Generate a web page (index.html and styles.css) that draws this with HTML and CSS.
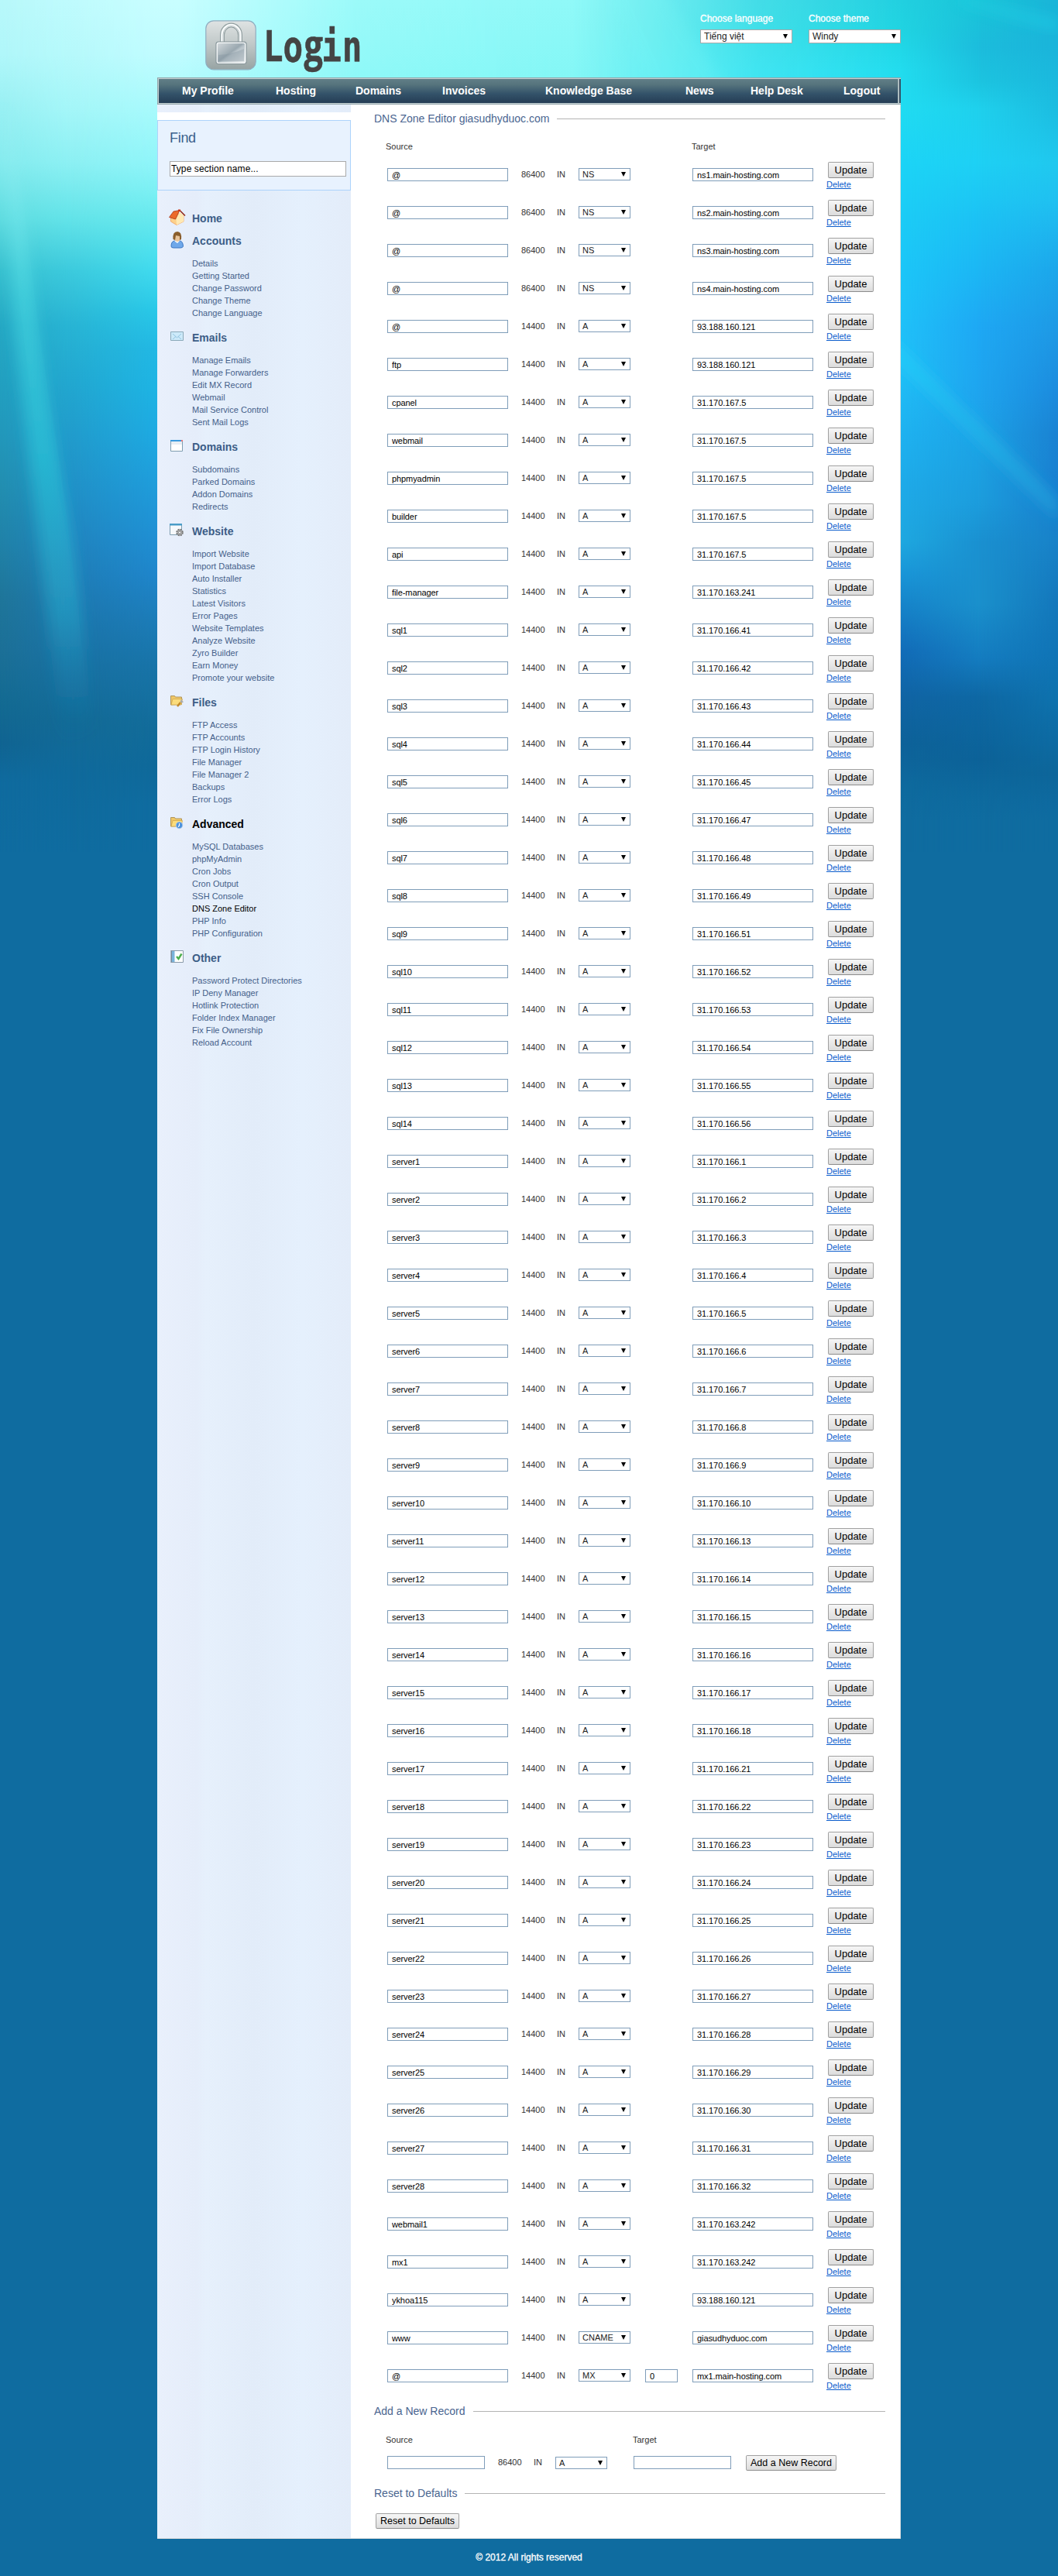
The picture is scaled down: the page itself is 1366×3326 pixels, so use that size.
FILE: index.html
```html
<!DOCTYPE html>
<html lang="en">
<head>
<meta charset="utf-8">
<title>DNS Zone Editor</title>
<link rel="stylesheet" href="styles.css">
</head>
<body>
<div class="sky" aria-hidden="true">
  <div class="tone tone-1"></div>
  <div class="tone tone-2"></div>
  <div class="tone tone-3"></div>
  <div class="tone tone-4"></div>
  <div class="tone tone-5"></div>
  <div class="tone tone-6"></div>
  <div class="tone tone-7"></div>
  <svg class="beams" viewBox="0 0 1366 1100" width="1366" height="1100">
    <defs>
      <linearGradient id="beam" x1="0" y1="0" x2="0" y2="1"><stop offset="0" stop-color="#a8f4f6" stop-opacity=".4"/><stop offset=".3" stop-color="#4cdce4" stop-opacity=".5"/><stop offset=".55" stop-color="#2cccdc" stop-opacity=".55"/><stop offset=".8" stop-color="#2ab4d0" stop-opacity=".4"/><stop offset="1" stop-color="#1a78a8" stop-opacity="0"/></linearGradient>
      <linearGradient id="ray" x1="0" y1="0" x2="1" y2="0"><stop offset="0" stop-color="#24d2fa" stop-opacity=".7"/><stop offset="1" stop-color="#22a4dc" stop-opacity=".6"/></linearGradient>
      <filter id="soft" x="-50%" y="-10%" width="200%" height="120%"><feGaussianBlur stdDeviation="8"/></filter>
    </defs>
    <path d="M2 140Q28 240 44 380T84 640T118 940L80 960Q48 700 18 420Z" fill="url(#beam)" filter="url(#soft)"/>
    <path d="M9 140Q24 200 36 310T66 530T102 800T120 950L88 920Q56 640 24 380Z" fill="url(#beam)" opacity=".15"/>
    <path d="M1150 435L1366 645V672L1150 460Z" fill="url(#ray)" filter="url(#soft)"/>
    <path d="M850-20L1000 200L880 200L780-20Z" fill="#7ef8f6" opacity=".18" filter="url(#soft)"/>
    <path d="M1240-4L1366 26V40L1240 4Z" fill="#24d4e8" opacity=".5" filter="url(#soft)"/>
  </svg>
</div>

<div class="page">
  <header class="header">
    <svg class="logo" width="210" height="74" viewBox="0 0 210 74" role="img" aria-label="Login">
      <defs>
        <linearGradient id="tile" x1="0" y1="0" x2="0" y2="1"><stop offset="0" stop-color="#dfe3e3"/><stop offset=".5" stop-color="#bfc7c7"/><stop offset="1" stop-color="#97a3a3"/></linearGradient>
        <linearGradient id="steel" x1="0" y1="0" x2="1" y2="1"><stop offset="0" stop-color="#d9dee0"/><stop offset=".48" stop-color="#9aa8b0"/><stop offset=".55" stop-color="#b9c4ca"/><stop offset="1" stop-color="#eef1f2"/></linearGradient>
      </defs>
      <rect x=".8" y=".8" width="64.4" height="63" rx="10" fill="url(#tile)" stroke="#8fadc0" stroke-width="1.2"/>
      <path d="M22 30V19a11.500 12.500 0 0 1 23 0V30" fill="none" stroke="#8f9c9e" stroke-width="6"/>
      <path d="M22 30V19a11.500 12.500 0 0 1 23 0V30" fill="none" stroke="#f7fafa" stroke-width="3.600"/>
      <path d="M23 30V19a10.500 11.500 0 0 1 21 0V30" fill="none" stroke="#b9c2c4" stroke-width="1"/>
      <rect x="14" y="28" width="39" height="28.500" rx="3" fill="url(#steel)" stroke="#87959a" stroke-width="1.200"/>
      <rect x="15.300" y="29.300" width="36.400" height="26" rx="2" fill="none" stroke="#f5f8f8" stroke-width="1.300"/>
      <path d="M17 45Q35 44 50 37V53H17Z" fill="#7e909b" opacity=".35"/>
      <g class="logo-text" transform="translate(75 53) scale(.76 1)"><text>Lo<tspan class="logo-g" x="69">g</tspan><tspan x="99">i</tspan><tspan x="134">n</tspan></text></g>
    </svg>
    <form class="prefs">
      <label class="pref">Choose language
        <span class="select pref-select"><select><option>Tiếng việt</option></select></span>
      </label>
      <label class="pref">Choose theme
        <span class="select pref-select"><select><option>Windy</option></select></span>
      </label>
    </form>
  </header>

  <nav class="nav">
    <a>My Profile</a><a>Hosting</a><a>Domains</a><a>Invoices</a><a>Knowledge Base</a><a>News</a><a>Help Desk</a><a>Logout</a>
  </nav>

  <div class="columns">
    <aside class="sidebar">
      <div class="find">
        <h2>Find</h2>
        <input type="text" value="Type section name...">
      </div>
      <section class="group group-home">
        <h3><svg viewBox="0 0 22 22"><path d="M2.500 10L9 5L19 8V16L10 20.500L2.500 16Z" fill="#fdd08a" stroke="#f0a060" stroke-width=".8"/><path d="M9.500 13L14 4L19 8V16L10 20.500Z" fill="#ffe9b4"/><path d="M.5 10.500L6 3L14 1.500L8.500 13Z" fill="#ec6a2a" stroke="#a83414" stroke-width=".8"/><path d="M14 1.500L21 8.500" fill="none" stroke="#8e2414" stroke-width="1.500"/><path d="M12 .5h3v2.500h-3z" fill="#c83418"/></svg>Home</h3>
      </section>
      <section class="group">
        <h3><svg viewBox="0 0 22 22"><path d="M3 19Q3 12 8 12H14Q18 12 18.500 19Q18 21 15 21H6Q3 21 3 19Z" fill="#6fa8ea" stroke="#3d78c4"/><path d="M7 12L11 15L14 12Z" fill="#fff"/><ellipse cx="11" cy="8" rx="4" ry="5" fill="#e8c49a"/><path d="M5.500 10Q4.500 0 11 0Q17 0 16 10L14 11V6L9 5L8 11Z" fill="#8a5e2c"/></svg>Accounts</h3>
        <ul><li>Details</li><li>Getting Started</li><li>Change Password</li><li>Change Theme</li><li>Change Language</li></ul>
      </section>
      <section class="group">
        <h3><svg viewBox="0 0 22 22"><path d="M2.500 4.500h16v11h-16z" fill="#cdeafa" stroke="#8aa8b8"/><path d="M5 7L10.500 12L16 7M5 14L9 10.500M16 14L12 10.500" fill="none" stroke="#8cc0dc" stroke-width=".9"/></svg>Emails</h3>
        <ul><li>Manage Emails</li><li>Manage Forwarders</li><li>Edit MX Record</li><li>Webmail</li><li>Mail Service Control</li><li>Sent Mail Logs</li></ul>
      </section>
      <section class="group">
        <h3><svg viewBox="0 0 22 22"><path d="M2.500 3.500h15v14h-15z" fill="#fff" stroke="#7f9db0"/><path d="M3 5h14v4H3z" fill="#e8eef4"/><path d="M2 3h14v2H2z" fill="#3a9ade"/><path d="M16 3h2v2h-2z" fill="#f07878"/></svg>Domains</h3>
        <ul><li>Subdomains</li><li>Parked Domains</li><li>Addon Domains</li><li>Redirects</li></ul>
      </section>
      <section class="group">
        <h3><svg viewBox="0 0 22 22"><path d="M1.500 2.500h15v14h-15z" fill="#f6f9fc" stroke="#7f9db0"/><path d="M1 2h16v2.500H1z" fill="#4a9cc8"/><circle cx="14" cy="13.500" r="3.800" fill="#b8b8b8" stroke="#777" stroke-width="2" stroke-dasharray="2 1"/><circle cx="14" cy="13.500" r="1.500" fill="#fff" stroke="#666" stroke-width=".7"/></svg>Website</h3>
        <ul><li>Import Website</li><li>Import Database</li><li>Auto Installer</li><li>Statistics</li><li>Latest Visitors</li><li>Error Pages</li><li>Website Templates</li><li>Analyze Website</li><li>Zyro Builder</li><li>Earn Money</li><li>Promote your website</li></ul>
      </section>
      <section class="group">
        <h3><svg viewBox="0 0 22 22"><path d="M2.500 15V3.500h5l1 1.500h8v9.500z" fill="#f0c868" stroke="#b09458"/><path d="M3 15L5 7.500H17.500L16 15Z" fill="#fbdc7c" stroke="#d0a850" stroke-width=".8"/><path d="M11 17L15 12" stroke="#c48a28" stroke-width="2.500"/><path d="M15 12Q14 9 17 8V10L19 11Q18 13 15 12Z" fill="#aaa"/></svg>Files</h3>
        <ul><li>FTP Access</li><li>FTP Accounts</li><li>FTP Login History</li><li>File Manager</li><li>File Manager 2</li><li>Backups</li><li>Error Logs</li></ul>
      </section>
      <section class="group current">
        <h3><svg viewBox="0 0 22 22"><path d="M2.500 15V3.500h5l1 1.500h8v9.500z" fill="#f0c868" stroke="#b09458"/><path d="M3 15L5 7.500H17.500L16 15Z" fill="#fbdc7c" stroke="#d0a850" stroke-width=".8"/><circle cx="13.500" cy="13.500" r="4.200" fill="#4a90dc" stroke="#a8c8ea"/><path d="M13.500 11V14L12 15.500" fill="none" stroke="#fff" stroke-width="1.200"/></svg>Advanced</h3>
        <ul><li>MySQL Databases</li><li>phpMyAdmin</li><li>Cron Jobs</li><li>Cron Output</li><li>SSH Console</li><li class="current">DNS Zone Editor</li><li>PHP Info</li><li>PHP Configuration</li></ul>
      </section>
      <section class="group">
        <h3><svg viewBox="0 0 22 22"><path d="M3.500 2.500h15v15h-15z" fill="#fff" stroke="#8a9aa8"/><path d="M4 3h3.500v14H4z" fill="#7ab4dc"/><path d="M3 2.500V18" stroke="#66788a" stroke-width="2" stroke-dasharray="1 1"/><path d="M10 10L12.500 13L16.500 6.500" fill="none" stroke="#4cae4c" stroke-width="2.400"/></svg>Other</h3>
        <ul><li>Password Protect Directories</li><li>IP Deny Manager</li><li>Hotlink Protection</li><li>Folder Index Manager</li><li>Fix File Ownership</li><li>Reload Account</li></ul>
      </section>
    </aside>

    <main class="main">
      <h2 class="title">DNS Zone Editor giasudhyduoc.com</h2>
      <div class="record labels"><span class="source">Source</span><span class="target">Target</span></div>
      <div id="records" class="records"></div>

      <h2 class="title">Add a New Record</h2>
      <div class="new-record labels"><span class="source">Source</span><span class="target">Target</span></div>
      <div class="new-record fields">
        <input class="field" type="text">
        <span class="text">86400</span>
        <span class="text">IN</span>
        <span class="select type"><select><option>A</option></select></span>
        <input class="field" type="text">
        <button class="button add" type="button">Add a New Record</button>
      </div>

      <h2 class="title">Reset to Defaults</h2>
      <button class="button reset" type="button">Reset to Defaults</button>
    </main>
  </div>
  <footer class="footer">© 2012 All rights reserved</footer>
</div>
<script src="records.js"></script>
</body>
</html>
```

FILE: records.js
```js
// [source, ttl, type, target, priority]
const records = [];
for (let i = 1; i <= 4; i++) records.push(['@', 86400, 'NS', `ns${i}.main-hosting.com`]);
records.push(
  ['@', 14400, 'A', '93.188.160.121'],
  ['ftp', 14400, 'A', '93.188.160.121']
);
for (const name of ['cpanel', 'webmail', 'phpmyadmin', 'builder', 'api']) {
  records.push([name, 14400, 'A', '31.170.167.5']);
}
records.push(['file-manager', 14400, 'A', '31.170.163.241']);
[41, 42, 43, 44, 45, 47, 48, 49, 51, 52, 53, 54, 55, 56].forEach((host, i) => {
  records.push([`sql${i + 1}`, 14400, 'A', `31.170.166.${host}`]);
});
[1, 2, 3, 4, 5, 6, 7, 8, 9, 10, 13, 14, 15, 16, 17, 18, 21, 22, 23, 24, 25, 26, 27, 28, 29, 30, 31, 32].forEach((host, i) => {
  records.push([`server${i + 1}`, 14400, 'A', `31.170.166.${host}`]);
});
records.push(
  ['webmail1', 14400, 'A', '31.170.163.242'],
  ['mx1', 14400, 'A', '31.170.163.242'],
  ['ykhoa115', 14400, 'A', '93.188.160.121'],
  ['www', 14400, 'CNAME', 'giasudhyduoc.com'],
  ['@', 14400, 'MX', 'mx1.main-hosting.com', 0]
);

document.getElementById('records').innerHTML = records.map(([source, ttl, type, target, priority]) => `
  <div class="record">
    <input class="field" type="text" value="${source}">
    <span class="text">${ttl}</span>
    <span class="text">IN</span>
    <span class="select type"><select><option>${type}</option></select></span>
    <span>${priority === undefined ? '' : `<input class="field priority" type="text" value="${priority}">`}</span>
    <input class="field" type="text" value="${target}">
    <span class="actions"><button class="button" type="button">Update</button><a class="delete" href="#">Delete</a></span>
  </div>`).join('');
```

FILE: styles.css
```css
* { box-sizing: border-box; }
body {
  margin: 0;
  min-height: 3326px;
  position: relative;
  background: #0f6ca0;
  font: 11px/16px "Liberation Sans", Arial, sans-serif;
  color: #333;
}
h2, h3, ul { margin: 0; padding: 0; font-weight: normal; }
ul { list-style: none; }
input, select, button { font-family: inherit; margin: 0; }

/* Backdrop: vertical tones cross-faded from left to right */
.sky { position: absolute; left: 0; top: 0; width: 1366px; height: 1100px; overflow: hidden; }
.tone, .beams { position: absolute; left: 0; top: 0; width: 1366px; height: 1100px; }
.tone-1 { background: linear-gradient(#b8f8fa 0, #b0f7fa 70px, #98f0f3 140px, #84ebee 210px, #60dce0 280px, #38c0cf 350px, #25a8c4 420px, #22a0c0 490px, #2298bb 560px, #228eb0 630px, #2082a8 700px, #1f769a 770px, #1c7097 840px, #136a92 910px, #106492 960px, #0f6b9f 1010px, #0f6ca0 1100px); }
.tone-2 {
  background: linear-gradient(#bffbfd 0, #b6f9fb 70px, #a4f6f8 140px, #8cf0f3 210px, #64e4e9 280px, #3ccadd 350px, #28b4d4 420px, #22a8d0 490px, #219ccc 560px, #208fc6 640px, #2084be 700px, #1d78b0 780px, #1870a2 860px, #136a96 930px, #0f6a9c 1000px, #0f6ca0 1100px);
  mask-image: linear-gradient(90deg, transparent 0, #000 90px);
}
.tone-3 {
  background: linear-gradient(#c8feff 0, #c0fcff 70px, #a8fafc 140px, #8ff5f9 210px, #7cf0f4 245px, #68e9ee 280px, #50e2ee 320px, #40daee 350px, #29c8e8 400px, #22b8e4 450px, #1eb4e4 500px, #1eaae2 560px, #1f9edc 620px, #1f90d4 690px, #1f86cc 740px, #1c7cb8 800px, #1874a8 860px, #126c9a 940px, #0f699a 990px, #0f6ca0 1040px);
  mask-image: linear-gradient(90deg, transparent 90px, #000 204px);
}
.tone-4 {
  background: linear-gradient(#90f9f8 0, #84f7f6 100px);
  mask-image: linear-gradient(90deg, transparent 230px, rgba(0,0,0,.8) 460px, #000 720px);
}
.tone-5 {
  background: linear-gradient(#22d0e0 0, #20d4e2 40px, #22dcee 90px, #20dcf2 140px, #1cd4f6 210px, #1cccf6 280px, #1cc6f8 350px, #20c0f8 440px, #20bef6 490px, #1eb2f0 560px, #1eaae8 630px, #1ea8e0 700px, #1a96d8 740px, #1684ca 780px, #126cb8 840px, #1064a4 900px, #0d6299 960px, #0e6a9e 1020px, #0f6ca0 1060px);
  mask-image: linear-gradient(90deg, transparent 740px, rgba(0,0,0,.7) 980px, #000 1163px);
}
.tone-6 {
  background: linear-gradient(#1ac4d8 0, #1cbcdc 60px, #1cc4e0 105px, #1fd0ec 140px, #1ed0f4 210px, #1cc2f4 280px, #1cb6f4 350px, #1ea8f4 420px, #1ea4ee 510px, #1ca2e4 580px, #1c9cdc 650px, #1a90d0 700px, #1a90cc 780px, #147cc0 850px, #0e68a4 900px, #0c6298 980px, #0e6a9e 1030px, #0f6ca0 1060px);
  mask-image: linear-gradient(90deg, transparent 1163px, #000 1265px);
}
.tone-7 {
  background: linear-gradient(#1ab4d8 0, #1ab4da 60px, #1cbce0 140px, #20c8ee 210px, #20c0f0 260px, #1eb4ee 300px, #1ca6ea 350px, #1e98e4 430px, #1c8cde 500px, #1a82d2 560px, #1880d0 640px, #1882c8 700px, #1478bc 770px, #1074b6 840px, #0e72ae 900px, #0d6ca4 950px, #0d669a 1000px, #0e6aa0 1040px, #0f6ca0 1060px);
  mask-image: linear-gradient(90deg, transparent 1265px, #000 1366px);
}

.page { position: relative; width: 960px; margin: 0 auto; }

.header { height: 100px; display: flex; justify-content: space-between; padding: 26px 0 0 62px; }
.logo { display: block; overflow: visible; }
.logo-text { font: bold 56px "DejaVu Sans Mono", monospace; fill: #444; stroke: #444; stroke-width: .6px; }
.logo-g { font: bold 57px "Open Sans", sans-serif; }
.prefs { display: flex; gap: 21px; margin-top: -10px; }
.pref { width: 119px; display: flex; flex-direction: column; gap: 6px; color: #fff; font-size: 12px; line-height: 16px; -webkit-text-stroke: .3px #fff; }

.select { display: block; position: relative; }
.select select {
  display: block; width: 100%; height: 100%; padding: 0 0 0 4px;
  appearance: none; border: 1px solid #7f9db9; border-radius: 0;
  background: #fff; color: #222; font-size: 11px;
}
.select::after { content: ""; position: absolute; right: 6px; top: 5px; border: 3px solid transparent; border-top: 6px solid #000; border-bottom: 0; }
.pref-select { height: 18px; -webkit-text-stroke: 0; }
.pref-select select { border-color: #a9a9a9; font-size: 12px; }
.pref-select::after { top: 6px; }

.nav {
  height: 35px; display: grid; grid-template-columns: 121px 103px 112px 133px 181px 84px 120px auto;
  padding-left: 31px; border: 1px solid #93a5aa; border-right: 0;
  background: linear-gradient(#627f88, #56747d 25%, #34536a 60%, #233b53);
  box-shadow: inset 1px 1px #c4d2d4, inset 0 -1px #c4d2d4, inset -2px 0 #344d60, inset -3px 0 #c4d2d4, inset -4px 0 #93a5aa;
  font-weight: bold; font-size: 14px; line-height: 33px; color: #fff; white-space: nowrap;
}

.columns { display: flex; height: 3143px; background: #fff; border-right: 1px solid #ddd; border-bottom: 1px solid #ddd; }
.sidebar { width: 250px; padding-top: 10px; background: linear-gradient(90deg, #e9f0fc, #e5edfa 20%, #e6f0fc 25%, #e2ecf9 50%, #e5f0fd 75%, #e3ecf9); }
.find { height: 101px; border-top: 10px solid #fff; background: #e8f2fe; box-shadow: inset 0 0 0 1px #add3fb; padding: 13px 6px 0 16px; margin-bottom: 28px; color: #3a5f8b; }
.find h2 { font-size: 18px; line-height: 20px; letter-spacing: -.3px; }
.find input { display: block; width: 228px; height: 20px; margin-top: 20px; padding: 0 1px; border: 1px solid #a9a9a9; font-size: 12px; letter-spacing: .1px; color: #000; }
.group { margin-bottom: 16px; color: #44608a; }
.group-home { margin-bottom: 0; }
.group h3 { display: flex; height: 16px; margin-bottom: 13px; padding-left: 15px; font-size: 14px; font-weight: bold; color: #3c5d87; }
.group svg { flex: none; width: 22px; height: 22px; margin: -4px 8px 0 0; }
.group ul { padding-left: 45px; }
.group.current h3, .group li.current { color: #000; }

.main { flex: 1; padding-top: 10px; }
.title { display: flex; align-items: center; gap: 10px; margin: 0 19px 0 30px; height: 16px; font-size: 14px; line-height: 16px; color: #4a6590; white-space: nowrap; }
.title::after { content: ""; flex: 1; height: 1px; background: #b4b4b4; }
.records { margin-bottom: 5px; }
.record { display: grid; grid-template-columns: 173px 46px 28px 86px 61px 173px 1fr; height: 49px; padding: 8px 0 0 47px; align-items: start; }
.labels { height: 48px; padding-top: 20px; }
.record.labels .target { grid-column: 6; }
.labels span { margin-left: -2px; }
.labels .target { margin-left: -1px; }
.field { width: 156px; height: 17px; padding: 0 5px; border: 1px solid #7f9db9; background: #fff; font-size: 11px; letter-spacing: -.08px; color: #000; }
.priority { width: 42px; display: block; }
.text { line-height: 17px; }
.type { width: 67px; height: 16px; }
.actions { display: flex; flex-direction: column; align-items: flex-start; margin-top: -8px; }
.button {
  height: 21px; padding: 0; border: 1px solid #a0a0a0; border-bottom-color: #8c8c8c; border-radius: 2px;
  background: linear-gradient(#f6f6f6, #dcdcdc); font-size: 13px; line-height: 18px; color: #000; white-space: nowrap;
}
.actions .button { width: 59px; margin-left: 2px; }
.delete { color: #0a5ccc; line-height: 16px; }

.new-record { display: grid; grid-template-columns: 143px 46px 28px 101px 145px 1fr; padding-left: 47px; align-items: start; }
.new-record .field { width: 126px; }
.new-record.labels { height: 49px; padding-top: 21px; }
.new-record.labels .target { grid-column: 5; }
.new-record.fields { height: 41px; padding-top: 1px; }
.new-record .type { margin-top: 1px; }
.add, .reset { height: 20px; font-size: 12.5px; }
.add { width: 117px; margin-top: -1px; }
.reset { display: block; width: 108px; margin: 18px 0 0 32px; }

.footer { height: 48px; padding-top: 12px; text-align: center; color: #fff; font-size: 12px; line-height: 24px; -webkit-text-stroke: .3px #fff; }
```
